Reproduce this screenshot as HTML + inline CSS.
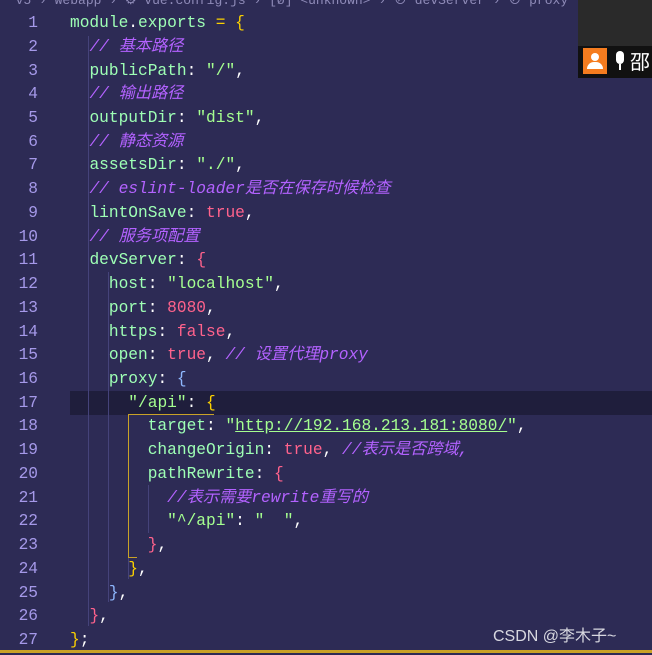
<!DOCTYPE html>
<html><head><meta charset="utf-8"><style>
html,body{margin:0;padding:0}
body{width:652px;height:653px;background:#2d2b55;overflow:hidden;position:relative;font-family:"Liberation Mono","Noto Sans CJK SC",monospace;font-size:16.2px}
.ln{position:absolute;left:0;width:38px;text-align:right;color:#a599e9;height:23.73px;line-height:23.73px}
.l{position:absolute;left:70px;white-space:pre;height:23.73px;line-height:23.73px;color:#fff}
.k{color:#9effb5}.s{color:#a5ff90}.c{color:#b362ff;font-style:italic}.t{color:#ff628c}.y{color:#fad000}.p{color:#ff628c}.b{color:#8fb8ff}
.g{position:absolute;width:1px;background:#45437a}
#w{position:absolute;left:0;top:2px;width:652px;height:653px}
</style></head><body>
<div style="position:absolute;left:0;top:-6px;width:578px;height:14px;color:#8f8bb8;font-size:13px;line-height:14px;white-space:pre;overflow:hidden">  v5 › webapp › ⚙ vue.config.js › [ø] &lt;unknown&gt; › ⊘ devServer › ⊘ proxy ›</div>
<div id="w">
<div style="position:absolute;left:70px;top:389px;width:582px;height:24px;background:#1f1e3c"></div>
<div class="g" style="left:88px;top:34px;height:590px"></div>
<div class="g" style="left:108px;top:270px;height:330px"></div>
<div class="g" style="left:128px;top:412px;height:165px"></div>
<div class="g" style="left:148px;top:483px;height:48px"></div>
<div style="position:absolute;left:128px;top:412px;width:1px;height:143px;background:#c9a227"></div>
<div style="position:absolute;left:128px;top:412px;width:86px;height:1px;background:#c9a227"></div>
<div style="position:absolute;left:128px;top:555px;width:9px;height:1px;background:#c9a227"></div>
<div class="ln" style="top:10px">1</div><div class="ln" style="top:33.7px">2</div><div class="ln" style="top:57.5px">3</div><div class="ln" style="top:81.2px">4</div><div class="ln" style="top:104.9px">5</div><div class="ln" style="top:128.7px">6</div><div class="ln" style="top:152.4px">7</div><div class="ln" style="top:176.1px">8</div><div class="ln" style="top:199.8px">9</div><div class="ln" style="top:223.6px">10</div><div class="ln" style="top:247.3px">11</div><div class="ln" style="top:271px">12</div><div class="ln" style="top:294.8px">13</div><div class="ln" style="top:318.5px">14</div><div class="ln" style="top:342.2px">15</div><div class="ln" style="top:366px">16</div><div class="ln" style="top:389.7px">17</div><div class="ln" style="top:413.4px">18</div><div class="ln" style="top:437.1px">19</div><div class="ln" style="top:460.9px">20</div><div class="ln" style="top:484.6px">21</div><div class="ln" style="top:508.3px">22</div><div class="ln" style="top:532.1px">23</div><div class="ln" style="top:555.8px">24</div><div class="ln" style="top:579.5px">25</div><div class="ln" style="top:603.3px">26</div><div class="ln" style="top:627px">27</div>
<div class="l" style="top:10px"><span class="k">module</span>.<span class="k">exports</span> <span class="y">= {</span></div>
<div class="l" style="top:33.7px">  <span class="c">// 基本路径</span></div>
<div class="l" style="top:57.5px">  <span class="k">publicPath</span>: <span class="s">"/"</span>,</div>
<div class="l" style="top:81.2px">  <span class="c">// 输出路径</span></div>
<div class="l" style="top:104.9px">  <span class="k">outputDir</span>: <span class="s">"dist"</span>,</div>
<div class="l" style="top:128.7px">  <span class="c">// 静态资源</span></div>
<div class="l" style="top:152.4px">  <span class="k">assetsDir</span>: <span class="s">"./"</span>,</div>
<div class="l" style="top:176.1px">  <span class="c">// eslint-loader是否在保存时候检查</span></div>
<div class="l" style="top:199.8px">  <span class="k">lintOnSave</span>: <span class="t">true</span>,</div>
<div class="l" style="top:223.6px">  <span class="c">// 服务项配置</span></div>
<div class="l" style="top:247.3px">  <span class="k">devServer</span>: <span class="p">{</span></div>
<div class="l" style="top:271px">    <span class="k">host</span>: <span class="s">"localhost"</span>,</div>
<div class="l" style="top:294.8px">    <span class="k">port</span>: <span class="t">8080</span>,</div>
<div class="l" style="top:318.5px">    <span class="k">https</span>: <span class="t">false</span>,</div>
<div class="l" style="top:342.2px">    <span class="k">open</span>: <span class="t">true</span>, <span class="c">// 设置代理proxy</span></div>
<div class="l" style="top:366px">    <span class="k">proxy</span>: <span class="b">{</span></div>
<div class="l" style="top:389.7px">      <span class="s">"/api"</span>: <span class="y">{</span></div>
<div class="l" style="top:413.4px">        <span class="k">target</span>: <span class="s">"<span style="text-decoration:underline">http://192.168.213.181:8080/</span>"</span>,</div>
<div class="l" style="top:437.1px">        <span class="k">changeOrigin</span>: <span class="t">true</span>, <span class="c">//表示是否跨域,</span></div>
<div class="l" style="top:460.9px">        <span class="k">pathRewrite</span>: <span class="p">{</span></div>
<div class="l" style="top:484.6px">          <span class="c">//表示需要rewrite重写的</span></div>
<div class="l" style="top:508.3px">          <span class="s">"^/api"</span>: <span class="s">"  "</span>,</div>
<div class="l" style="top:532.1px">        <span class="p">}</span>,</div>
<div class="l" style="top:555.8px">      <span class="y">}</span>,</div>
<div class="l" style="top:579.5px">    <span class="b">}</span>,</div>
<div class="l" style="top:603.3px">  <span class="p">}</span>,</div>
<div class="l" style="top:627px"><span class="y">}</span>;</div>
</div>
<div style="position:absolute;left:0;top:650px;width:652px;height:3px;background:#c9a227"></div>
<div style="position:absolute;left:493px;top:622px;color:#d8d8e0;font-family:'Liberation Sans','Noto Sans CJK SC',sans-serif;font-size:16px">CSDN @李木子~</div>
<div style="position:absolute;left:578px;top:0;width:74px;height:78px;background:#111"></div>
<div style="position:absolute;left:578px;top:0;width:74px;height:46px;background:#2a2a2a"></div>
<div style="position:absolute;left:583px;top:48px;width:24px;height:26px;background:#f57c1f"><div style="position:absolute;left:8px;top:5px;width:8px;height:8px;border-radius:50%;background:#fff"></div><div style="position:absolute;left:4px;top:14px;width:16px;height:7px;border-radius:8px 8px 0 0;background:#fff"></div></div>
<div style="position:absolute;left:616px;top:51px;width:8px;height:13px;border-radius:4px;background:#fff"></div>
<div style="position:absolute;left:619px;top:64px;width:2px;height:6px;background:#fff"></div>
<div style="position:absolute;left:630px;top:48px;color:#fff;font-family:'Noto Sans CJK SC',sans-serif;font-size:20px;line-height:26px">邵</div>
</body></html>
